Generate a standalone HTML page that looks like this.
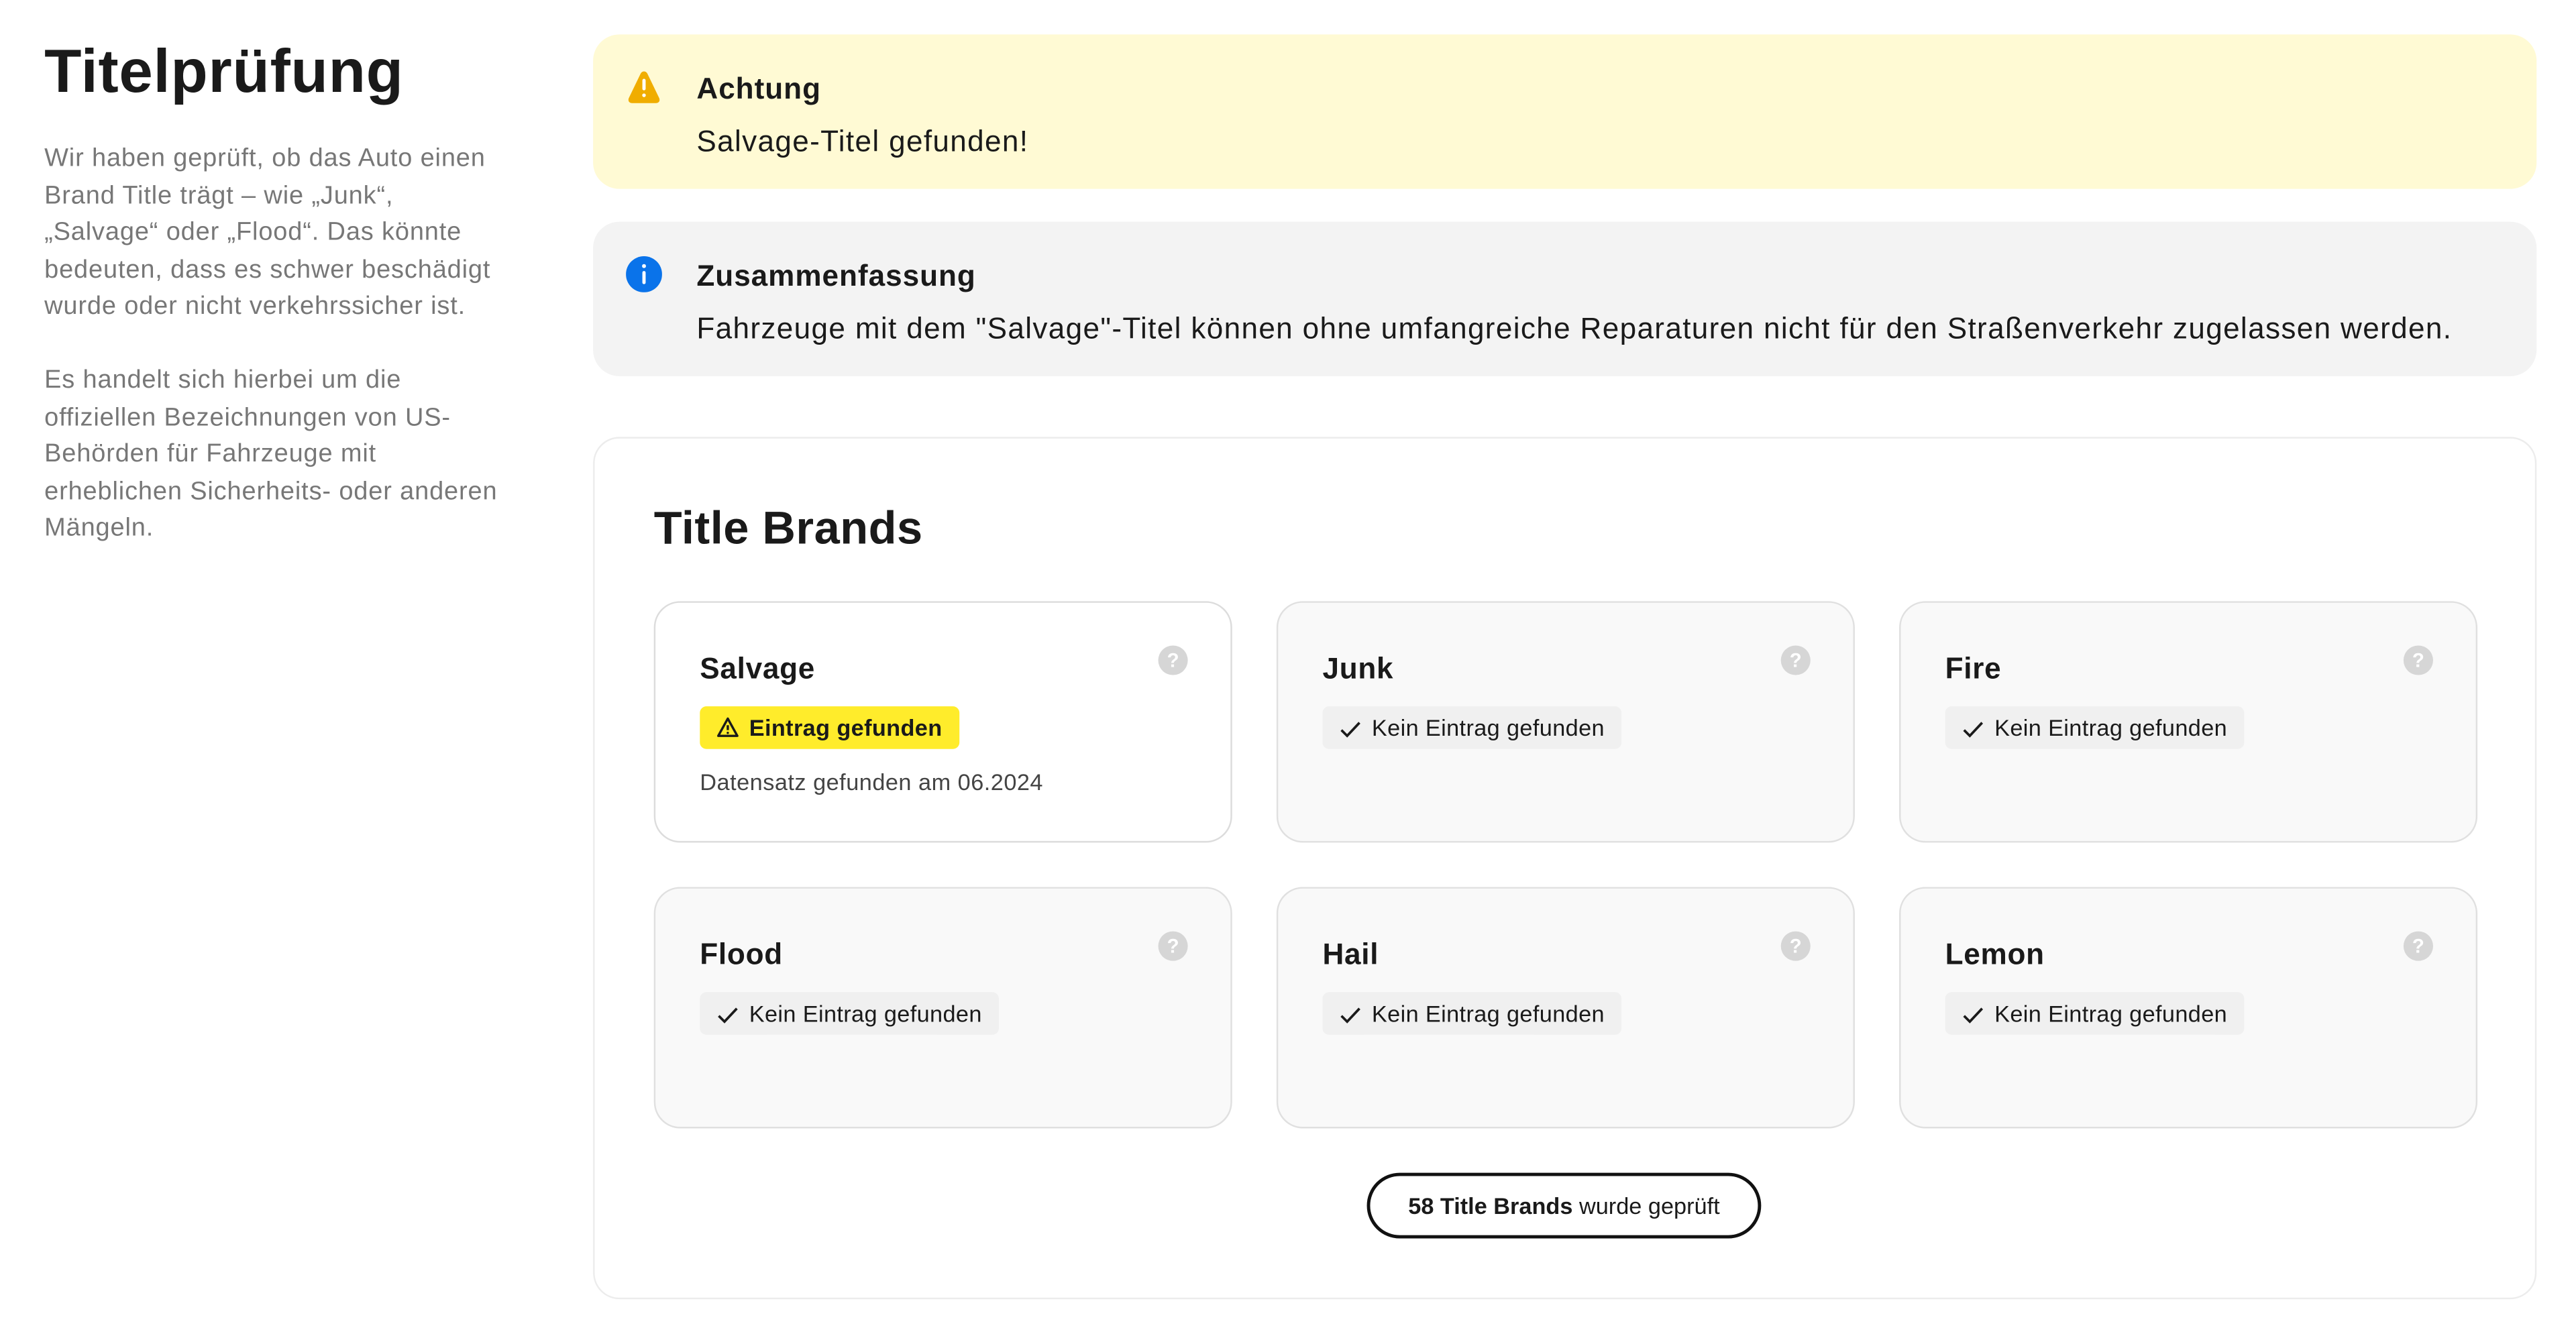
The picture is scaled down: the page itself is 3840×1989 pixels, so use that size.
<!DOCTYPE html>
<html><head><meta charset="utf-8"><style>
html,body{margin:0;padding:0;background:#fff;width:3840px;height:1988px;overflow:hidden}
#w{position:absolute;left:0;top:0;width:1568px;height:812px;transform:scale(2.449);transform-origin:0 0;font-family:"Liberation Sans",sans-serif;color:#1a1a1a}
.a{position:absolute}
h1{position:absolute;left:27px;top:23px;margin:0;font-size:37px;font-weight:bold;letter-spacing:0.3px}
.side{left:27px;top:86px;width:320px;font-size:15.5px;line-height:22.5px;color:#777;letter-spacing:0.35px;white-space:nowrap}
.box{left:361px;width:1183px;height:94px;border-radius:16px}
.box .ic{position:absolute;left:20px;top:21px}
.box .t{position:absolute;left:63px;top:23px;font-size:18px;font-weight:bold;letter-spacing:0.4px}
.box .b{position:absolute;left:63px;top:55px;font-size:18px;letter-spacing:0.55px}
.outer{left:361px;top:266px;width:1181px;height:523px;border:1px solid #ececec;border-radius:16px}
.card{width:350px;height:145px;border:1px solid #e0e0e0;border-radius:16px;background:#f9f9f9}
.card .n{position:absolute;left:27px;top:30px;font-size:18px;font-weight:bold;letter-spacing:0.3px}
.card .q{position:absolute;left:306px;top:26px;width:18px;height:18px;border-radius:50%;background:#d6d6d6;color:#fff;font-size:12px;font-weight:bold;text-align:center;line-height:18px}
.bd{position:absolute;left:27px;top:63px;height:26px;border-radius:4px;background:#f0f0f0;font-size:14px;line-height:26px;padding:0 10px 0 10px;white-space:nowrap;letter-spacing:0.15px}
.bd svg{vertical-align:-2px;margin-right:6px}
</style></head><body><div id="w">
<h1>Titelprüfung</h1>
<div class="a side">Wir haben geprüft, ob das Auto einen<br>Brand Title trägt – wie „Junk“,<br>„Salvage“ oder „Flood“. Das könnte<br>bedeuten, dass es schwer beschädigt<br>wurde oder nicht verkehrssicher ist.<br><br>Es handelt sich hierbei um die<br>offiziellen Bezeichnungen von US-<br>Behörden für Fahrzeuge mit<br>erheblichen Sicherheits- oder anderen<br>Mängeln.</div>

<div class="a box" style="top:21px;background:#fffad4">
<svg class="ic" width="22" height="22" viewBox="0 0 22 22"><path d="M11 1.5c1 0 1.7.6 2.2 1.6l7 14.5c.8 1.8-.2 3.2-2 3.2H3.8c-1.8 0-2.8-1.4-2-3.2l7-14.5C9.3 2.1 10 1.5 11 1.5z" fill="#f0ad00"/><rect x="10" y="6" width="2" height="7" rx="1" fill="#fff"/><circle cx="11" cy="16" r="1.1" fill="#fff"/></svg>
<div class="t">Achtung</div><div class="b">Salvage-Titel gefunden!</div></div>

<div class="a box" style="top:135px;background:#f3f3f3">
<svg class="ic" width="22" height="22" viewBox="0 0 22 22"><circle cx="11" cy="11" r="11" fill="#0a73ea"/><rect x="10" y="9" width="2" height="8" rx="1" fill="#fff"/><circle cx="11" cy="6" r="1.2" fill="#fff"/></svg>
<div class="t">Zusammenfassung</div><div class="b">Fahrzeuge mit dem "Salvage"-Titel können ohne umfangreiche Reparaturen nicht für den Straßenverkehr zugelassen werden.</div></div>

<div class="a outer"></div>
<div class="a" style="left:398px;top:306px;font-size:28px;font-weight:bold;letter-spacing:0.2px">Title Brands</div>

<div class="a card" style="left:398px;top:366px;background:#fff;border-color:#dcdcdc"><div class="n">Salvage</div><div class="q">?</div>
<div class="bd" style="background:#ffec2b;font-weight:bold"><svg width="14" height="14" viewBox="0 0 14 14"><path d="M7 1.5L12.8 12H1.2z" fill="none" stroke="#1a1a1a" stroke-width="1.4" stroke-linejoin="round"/><path d="M7 5.5v3" stroke="#1a1a1a" stroke-width="1.4"/><circle cx="7" cy="10.2" r=".7" fill="#1a1a1a"/></svg>Eintrag gefunden</div>
<div class="a" style="left:27px;top:101px;font-size:14px;color:#444;letter-spacing:0.2px">Datensatz gefunden am 06.2024</div></div>

<div class="a card" style="left:777px;top:366px"><div class="n">Junk</div><div class="q">?</div><div class="bd"><svg width="14" height="12" viewBox="0 0 14 12"><path d="M1.5 6.5l3.5 3.5L12.5 2" fill="none" stroke="#1a1a1a" stroke-width="1.5"/></svg>Kein Eintrag gefunden</div></div>
<div class="a card" style="left:1156px;top:366px"><div class="n">Fire</div><div class="q">?</div><div class="bd"><svg width="14" height="12" viewBox="0 0 14 12"><path d="M1.5 6.5l3.5 3.5L12.5 2" fill="none" stroke="#1a1a1a" stroke-width="1.5"/></svg>Kein Eintrag gefunden</div></div>
<div class="a card" style="left:398px;top:540px"><div class="n">Flood</div><div class="q">?</div><div class="bd"><svg width="14" height="12" viewBox="0 0 14 12"><path d="M1.5 6.5l3.5 3.5L12.5 2" fill="none" stroke="#1a1a1a" stroke-width="1.5"/></svg>Kein Eintrag gefunden</div></div>
<div class="a card" style="left:777px;top:540px"><div class="n">Hail</div><div class="q">?</div><div class="bd"><svg width="14" height="12" viewBox="0 0 14 12"><path d="M1.5 6.5l3.5 3.5L12.5 2" fill="none" stroke="#1a1a1a" stroke-width="1.5"/></svg>Kein Eintrag gefunden</div></div>
<div class="a card" style="left:1156px;top:540px"><div class="n">Lemon</div><div class="q">?</div><div class="bd"><svg width="14" height="12" viewBox="0 0 14 12"><path d="M1.5 6.5l3.5 3.5L12.5 2" fill="none" stroke="#1a1a1a" stroke-width="1.5"/></svg>Kein Eintrag gefunden</div></div>

<div class="a" style="left:832px;top:714px;width:236px;height:36px;border:2px solid #111;border-radius:20px;text-align:center;line-height:36px;font-size:14px"><b>58 Title Brands</b> wurde geprüft</div>
</div></body></html>
